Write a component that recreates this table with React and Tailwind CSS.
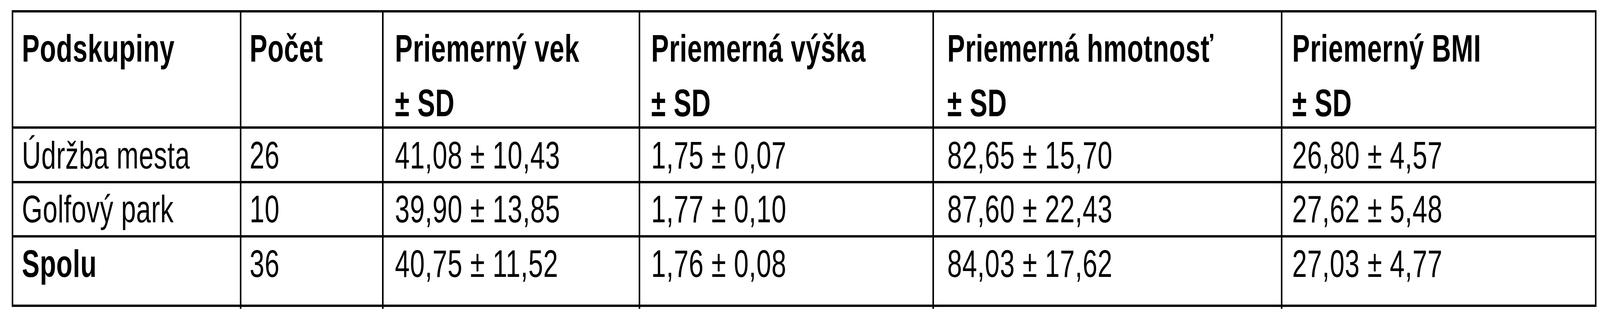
import React from "react";

const pads = ["pl-[22px]", "pl-[21px]", "pl-[29px]", "pl-[28px]", "pl-[34px]", "pl-[25px]"];

const header = [
  ["Podskupiny"],
  ["Počet"],
  ["Priemerný vek", "± SD"],
  ["Priemerná výška", "± SD"],
  ["Priemerná hmotnosť", "± SD"],
  ["Priemerný BMI", "± SD"],
];

const rows = [
  { bold: false, pt: "pt-[13px]", cells: ["Údržba mesta", "26", "41,08 ± 10,43", "1,75 ± 0,07", "82,65 ± 15,70", "26,80 ± 4,57"] },
  { bold: false, pt: "pt-[11px]", cells: ["Golfový park", "10", "39,90 ± 13,85", "1,77 ± 0,10", "87,60 ± 22,43", "27,62 ± 5,48"] },
  { bold: true, pt: "pt-[12px]", cells: ["Spolu", "36", "40,75 ± 11,52", "1,76 ± 0,08", "84,03 ± 17,62", "27,03 ± 4,77"] },
];

export default function App() {
  return (
    <div className="min-h-[800px] bg-white pt-[26px] pl-[30px] font-['Liberation_Sans',Arial,sans-serif] text-[99px] tracking-[1px] text-black">
      <div className="grid w-fit grid-cols-[580px_360px_653px_748px_888px_800px] grid-rows-[292px_134px_133px_172px] gap-x-[4px] gap-y-[6px] bg-black px-[4px] py-[6px]">
        {header.map((lines, i) => (
          <div key={"h" + i} className={`bg-white pt-[22px] font-bold leading-[140px] whitespace-nowrap ${pads[i]}`}>
            <div className="origin-left scale-x-[0.685]">
              {lines.map((l, j) => (
                <div key={j}>{l}</div>
              ))}
            </div>
          </div>
        ))}
        {rows.map((r, ri) =>
          r.cells.map((c, ci) => (
            <div
              key={ri + "-" + ci}
              className={`bg-white leading-[110px] whitespace-nowrap ${r.pt} ${pads[ci]} ${r.bold && ci === 0 ? "font-bold" : "font-normal"}`}
            >
              <div className="origin-left scale-x-[0.685]">{c}</div>
            </div>
          ))
        )}
      </div>
      <div className="ml-[4px] grid h-[5px] w-fit grid-cols-[580px_360px_653px_748px_888px_800px] gap-x-[4px] bg-black">
        <div className="bg-white" />
        <div className="bg-white" />
        <div className="bg-white" />
        <div className="bg-white" />
        <div className="bg-white" />
        <div className="bg-white" />
      </div>
    </div>
  );
}
